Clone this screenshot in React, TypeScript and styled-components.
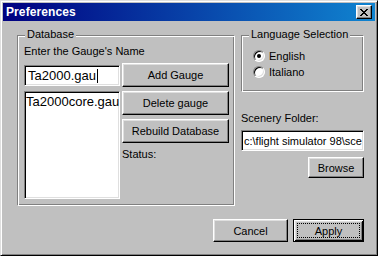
import React from "react";
import styled, { createGlobalStyle, css } from "styled-components";

const GlobalStyle = createGlobalStyle`
  html, body {
    margin: 0;
    padding: 0;
    background: #c0c0c0;
  }
  body {
    font-family: "Liberation Sans", Arial, sans-serif;
    font-size: 11px;
    color: #000;
  }
`;

const raised = css`
  border: 1px solid;
  border-color: #fff #000 #000 #fff;
  box-shadow: inset -1px -1px #808080, inset 1px 1px #dfdfdf;
`;

const sunken = css`
  border: 1px solid;
  border-color: #808080 #fff #fff #808080;
  box-shadow: inset 1px 1px #000, inset -1px -1px #dfdfdf;
  background: #fff;
`;

const Window = styled.div`
  width: 378px;
  height: 256px;
  box-sizing: border-box;
  padding: 2px;
  background: #c0c0c0;
  border: 1px solid;
  border-color: #dfdfdf #000 #000 #dfdfdf;
  box-shadow: inset 1px 1px #fff, inset -1px -1px #808080;
  display: flex;
  flex-direction: column;
`;

const TitleBar = styled.div`
  height: 18px;
  flex: none;
  display: flex;
  align-items: center;
  justify-content: space-between;
  padding-left: 3px;
  background: linear-gradient(90deg, #000080 0%, #1084d0 100%);
`;

const TitleText = styled.span`
  color: #fff;
  font-weight: bold;
  font-size: 12px;
  letter-spacing: 0.1px;
`;

const CloseButton = styled.div`
  ${raised};
  box-sizing: border-box;
  width: 16px;
  height: 14px;
  margin-right: 3px;
  background: #c0c0c0;
  display: flex;
  align-items: center;
  justify-content: center;
`;

const Body = styled.div`
  flex: 1;
  display: flex;
  flex-direction: column;
  padding: 14px 11px 11px 14px;
`;

const TopRow = styled.div`
  display: flex;
  gap: 6px;
  align-items: flex-start;
`;

const GroupBox = styled.div<{ $w: number; $h: number; $pad: string }>`
  position: relative;
  box-sizing: border-box;
  width: ${(p) => p.$w}px;
  height: ${(p) => p.$h}px;
  padding: ${(p) => p.$pad};
  border: 1px solid;
  border-color: #808080 #fff #fff #808080;
  box-shadow: inset 1px 1px #fff, inset -1px -1px #808080;
`;

const Legend = styled.span`
  position: absolute;
  top: -8px;
  left: 7px;
  padding: 0 2px;
  line-height: 13px;
  background: #c0c0c0;
`;

const Label = styled.div<{ $mt?: number }>`
  line-height: 13px;
  margin-top: ${(p) => p.$mt ?? 0}px;
  white-space: nowrap;
`;

const GaugeRow = styled.div`
  display: flex;
  gap: 2px;
  margin-top: 5px;
`;

const LeftCol = styled.div`
  width: 96px;
  display: flex;
  flex-direction: column;
`;

const ButtonCol = styled.div`
  width: 107px;
  display: flex;
  flex-direction: column;
  gap: 4px;
`;

const TextField = styled.div<{ $size: number; $mt?: number; $padX?: number }>`
  ${sunken};
  box-sizing: border-box;
  height: 21px;
  margin-top: ${(p) => p.$mt ?? 0}px;
  padding: 0 ${(p) => p.$padX ?? 3}px;
  display: flex;
  align-items: center;
  font-size: ${(p) => p.$size}px;
  white-space: nowrap;
  overflow: hidden;
`;

const Caret = styled.span`
  display: inline-block;
  width: 1px;
  height: 14px;
  margin-left: 1px;
  background: #000;
`;

const ListBox = styled.div`
  ${sunken};
  box-sizing: border-box;
  height: 108px;
  margin-top: 5px;
  padding: 2px 1px;
  font-size: 13px;
  line-height: 15px;
  white-space: nowrap;
  overflow: hidden;
`;

const Button = styled.div<{ $w?: number; $h: number; $default?: boolean }>`
  position: relative;
  box-sizing: border-box;
  width: ${(p) => (p.$w ? `${p.$w}px` : "auto")};
  height: ${(p) => p.$h}px;
  display: flex;
  align-items: center;
  justify-content: center;
  background: #c0c0c0;
  ${(p) =>
    p.$default
      ? css`
          border: 1px solid #000;
          box-shadow: inset 1px 1px #fff, inset -1px -1px #000,
            inset 2px 2px #dfdfdf, inset -2px -2px #808080;
          &::after {
            content: "";
            position: absolute;
            inset: 3px;
            border: 1px dotted #000;
          }
        `
      : raised};
`;

const RightCol = styled.div`
  width: 123px;
  display: flex;
  flex-direction: column;
`;

const RadioRow = styled.div`
  display: flex;
  align-items: center;
  height: 16px;
  gap: 4px;
`;

const Radio = styled.span<{ $checked?: boolean }>`
  position: relative;
  box-sizing: border-box;
  width: 12px;
  height: 12px;
  border-radius: 50%;
  border: 1px solid;
  border-color: #808080 #fff #fff #808080;
  box-shadow: inset 1px 1px #000, inset -1px -1px #dfdfdf;
  background: #fff;
  &::after {
    content: "";
    display: ${(p) => (p.$checked ? "block" : "none")};
    position: absolute;
    left: 3px;
    top: 3px;
    width: 4px;
    height: 4px;
    border-radius: 50%;
    background: #000;
  }
`;

const BrowseRow = styled.div`
  display: flex;
  justify-content: flex-end;
  margin-top: 6px;
`;

const Footer = styled.div`
  margin-top: auto;
  display: flex;
  justify-content: flex-end;
  gap: 5px;
`;

const CloseGlyph = () => (
  <svg width="8" height="7" viewBox="0 0 8 7" shapeRendering="crispEdges">
    <path
      d="M0 0h2v1H0z M6 0h2v1H6z M1 1h2v1H1z M5 1h2v1H5z M2 2h4v1H2z M3 3h2v1H3z M2 4h4v1H2z M1 5h2v1H1z M5 5h2v1H5z M0 6h2v1H0z M6 6h2v1H6z"
      fill="#000"
    />
  </svg>
);

export default function App() {
  return (
    <>
      <GlobalStyle />
      <Window>
        <TitleBar>
          <TitleText>Preferences</TitleText>
          <CloseButton>
            <CloseGlyph />
          </CloseButton>
        </TitleBar>
        <Body>
          <TopRow>
            <GroupBox $w={218} $h={171} $pad="9px 5px 6px 6px">
              <Legend>Database</Legend>
              <Label>Enter the Gauge's Name</Label>
              <GaugeRow>
                <LeftCol>
                  <TextField $size={13} $mt={2}>
                    Ta2000.gau
                    <Caret />
                  </TextField>
                  <ListBox>Ta2000core.gau</ListBox>
                </LeftCol>
                <ButtonCol>
                  <Button $h={24}>Add Gauge</Button>
                  <Button $h={24}>Delete gauge</Button>
                  <Button $h={24}>Rebuild Database</Button>
                  <Label $mt={1}>Status:</Label>
                </ButtonCol>
              </GaugeRow>
            </GroupBox>
            <RightCol>
              <GroupBox $w={123} $h={57} $pad="12px 4px 0 11px">
                <Legend>Language Selection</Legend>
                <RadioRow>
                  <Radio $checked />
                  English
                </RadioRow>
                <RadioRow>
                  <Radio />
                  Italiano
                </RadioRow>
              </GroupBox>
              <Label $mt={20}>Scenery Folder:</Label>
              <TextField $size={11} $mt={5} $padX={2}>
                c:\flight simulator 98\sce
              </TextField>
              <BrowseRow>
                <Button $w={56} $h={21}>
                  Browse
                </Button>
              </BrowseRow>
            </RightCol>
          </TopRow>
          <Footer>
            <Button $w={75} $h={23}>
              Cancel
            </Button>
            <Button $w={71} $h={23} $default>
              Apply
            </Button>
          </Footer>
        </Body>
      </Window>
    </>
  );
}
